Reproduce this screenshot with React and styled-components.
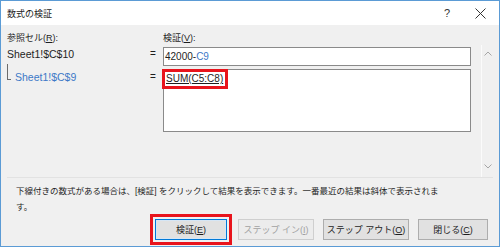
import React from 'react';
import styled, { createGlobalStyle } from 'styled-components';

const GlobalStyle = createGlobalStyle`
    html, body {
        margin: 0;
        padding: 0;
        background: #ffffff;
    }
    body {
        font-family: "Liberation Sans", "Noto Sans CJK JP", sans-serif;
    }
`

const Window = styled.div`
    width: 500px;
    height: 247px;
    box-sizing: border-box;
    border: 1px solid #5b9bd5;
    display: flex;
    flex-direction: column;
    background: #f0f0f0;
    color: #1e1e1e;
    font-size: 9px;
`

const TitleBar = styled.div`
    height: 24px;
    background: #ffffff;
    display: flex;
    align-items: center;
    padding-left: 6px;
    flex-shrink: 0;
`

const Title = styled.div`
    flex: 1;
    font-size: 9px;
    color: #1a1a1a;
`

const TitleButton = styled.div`
    width: ${p => p.w}px;
    height: 24px;
    display: flex;
    align-items: center;
    justify-content: center;
    font-size: 11px;
    color: #333;
`

const Body = styled.div`
    flex: 1;
    display: flex;
    flex-direction: column;
    padding: 7px 6px 0 6px;
`

const Labels = styled.div`
    display: grid;
    grid-template-columns: 156px 308px;
    line-height: 12px;
    height: 12px;
`

const Panel = styled.div`
    margin-top: 1px;
    height: 132px;
    display: flex;
    border-bottom: 1px solid #e2e2e2;
`

const Rows = styled.div`
    flex: 1;
    padding-top: 2px;
    display: grid;
    grid-template-columns: 140px 16px 308px;
    grid-template-rows: 19px 63px;
    row-gap: 3px;
    align-content: start;
`

const RefCell = styled.div`
    display: flex;
    align-items: flex-start;
    padding-top: ${p => p.top}px;
    font-size: 10.5px;
    line-height: 12px;
    color: ${p => p.blue ? '#3d79c7' : '#1e1e1e'};
`

const Bracket = styled.span`
    width: 3px;
    height: 15px;
    margin-top: -7px;
    margin-right: 4px;
    border-left: 1px solid #6b6b6b;
    border-bottom: 1px solid #6b6b6b;
    flex-shrink: 0;
`

const Eq = styled.div`
    padding-top: ${p => p.top}px;
    padding-left: 3px;
    font-size: 10px;
    line-height: 12px;
`

const Field = styled.div`
    box-sizing: border-box;
    height: ${p => p.h}px;
    background: #ffffff;
    border: 1px solid #8a8a8a;
    padding: 0 1px;
    font-size: 10px;
    line-height: 17px;
`

const Blue = styled.span`
    color: #3d79c7;
`

const Formula = styled.span`
    display: inline-block;
    line-height: 14px;
    padding: 0 2px 0 1px;
    text-decoration: underline;
    outline: 3px solid #e8141c;
`

const ScrollBar = styled.div`
    width: 11px;
    border-left: 1px solid #fbfbfb;
    display: flex;
    flex-direction: column;
    align-items: center;
    justify-content: space-between;
    padding: 6px 0 8px 0;
`

const FooterText = styled.div`
    margin-top: 5px;
    padding-left: 9px;
    font-size: 8.5px;
    line-height: 16px;
    color: #1e1e1e;
`

const ButtonRow = styled.div`
    margin-top: 4px;
    display: flex;
    justify-content: flex-end;
    gap: 9px;
    padding-right: 5px;
`

const Button = styled.div`
    box-sizing: border-box;
    width: ${p => p.w}px;
    height: 21px;
    display: flex;
    align-items: center;
    justify-content: center;
    font-size: 9px;
    background: ${p => p.disabled ? '#ececec' : '#e1e1e1'};
    border: 1px solid ${p => p.primary ? '#0078d7' : p.disabled ? '#cfcfcf' : '#adadad'};
    box-shadow: ${p => p.primary ? 'inset 0 0 0 1px #d6e6f5' : 'none'};
    color: ${p => p.disabled ? '#a2a2a2' : '#1e1e1e'};
    margin-right: ${p => p.primary ? 2 : 0}px;
    outline: ${p => p.highlight ? '3px solid #e8141c' : 'none'};
    outline-offset: 2px;
`

function Chevron({ up }) {
    return (
        <svg width="8" height="5" viewBox="0 0 8 5">
            <polyline
                points={up ? '0.5,4.5 4,1 7.5,4.5' : '0.5,0.5 4,4 7.5,0.5'}
                fill="none"
                stroke="#a6a6a6"
                strokeWidth="1"
            />
        </svg>
    )
}

function App() {
    return (
        <>
            <GlobalStyle />
            <Window>
                <TitleBar>
                    <Title>数式の検証</Title>
                    <TitleButton w={30}>?</TitleButton>
                    <TitleButton w={36}>
                        <svg width="11" height="11" viewBox="0 0 11 11">
                            <path d="M0.5 0.5 L10.5 10.5 M10.5 0.5 L0.5 10.5" stroke="#333" strokeWidth="1" />
                        </svg>
                    </TitleButton>
                    <div style={{ width: 1 }} />
                </TitleBar>
                <Body>
                    <Labels>
                        <div>参照セル(<u>R</u>):</div>
                        <div>検証(<u>V</u>):</div>
                    </Labels>
                    <Panel>
                        <Rows>
                            <RefCell top={1}>Sheet1!$C$10</RefCell>
                            <Eq top={1}>=</Eq>
                            <Field h={19}>42000-<Blue>C9</Blue></Field>

                            <RefCell top={2} blue>
                                <Bracket />
                                Sheet1!$C$9
                            </RefCell>
                            <Eq top={2}>=</Eq>
                            <Field h={63}>
                                <Formula>SUM(C5:C8)</Formula>
                            </Field>
                        </Rows>
                        <ScrollBar>
                            <Chevron up />
                            <Chevron />
                        </ScrollBar>
                    </Panel>
                    <FooterText>
                        下線付きの数式がある場合は、[検証] をクリックして結果を表示できます。一番最近の結果は斜体で表示されま<br />す。
                    </FooterText>
                    <ButtonRow>
                        <Button w={72} primary highlight>検証(<u>E</u>)</Button>
                        <Button w={76} disabled>ステップ イン(<u>I</u>)</Button>
                        <Button w={86}>ステップ アウト(<u>O</u>)</Button>
                        <Button w={70}>閉じる(<u>C</u>)</Button>
                    </ButtonRow>
                </Body>
            </Window>
        </>
    )
}

export default App;
